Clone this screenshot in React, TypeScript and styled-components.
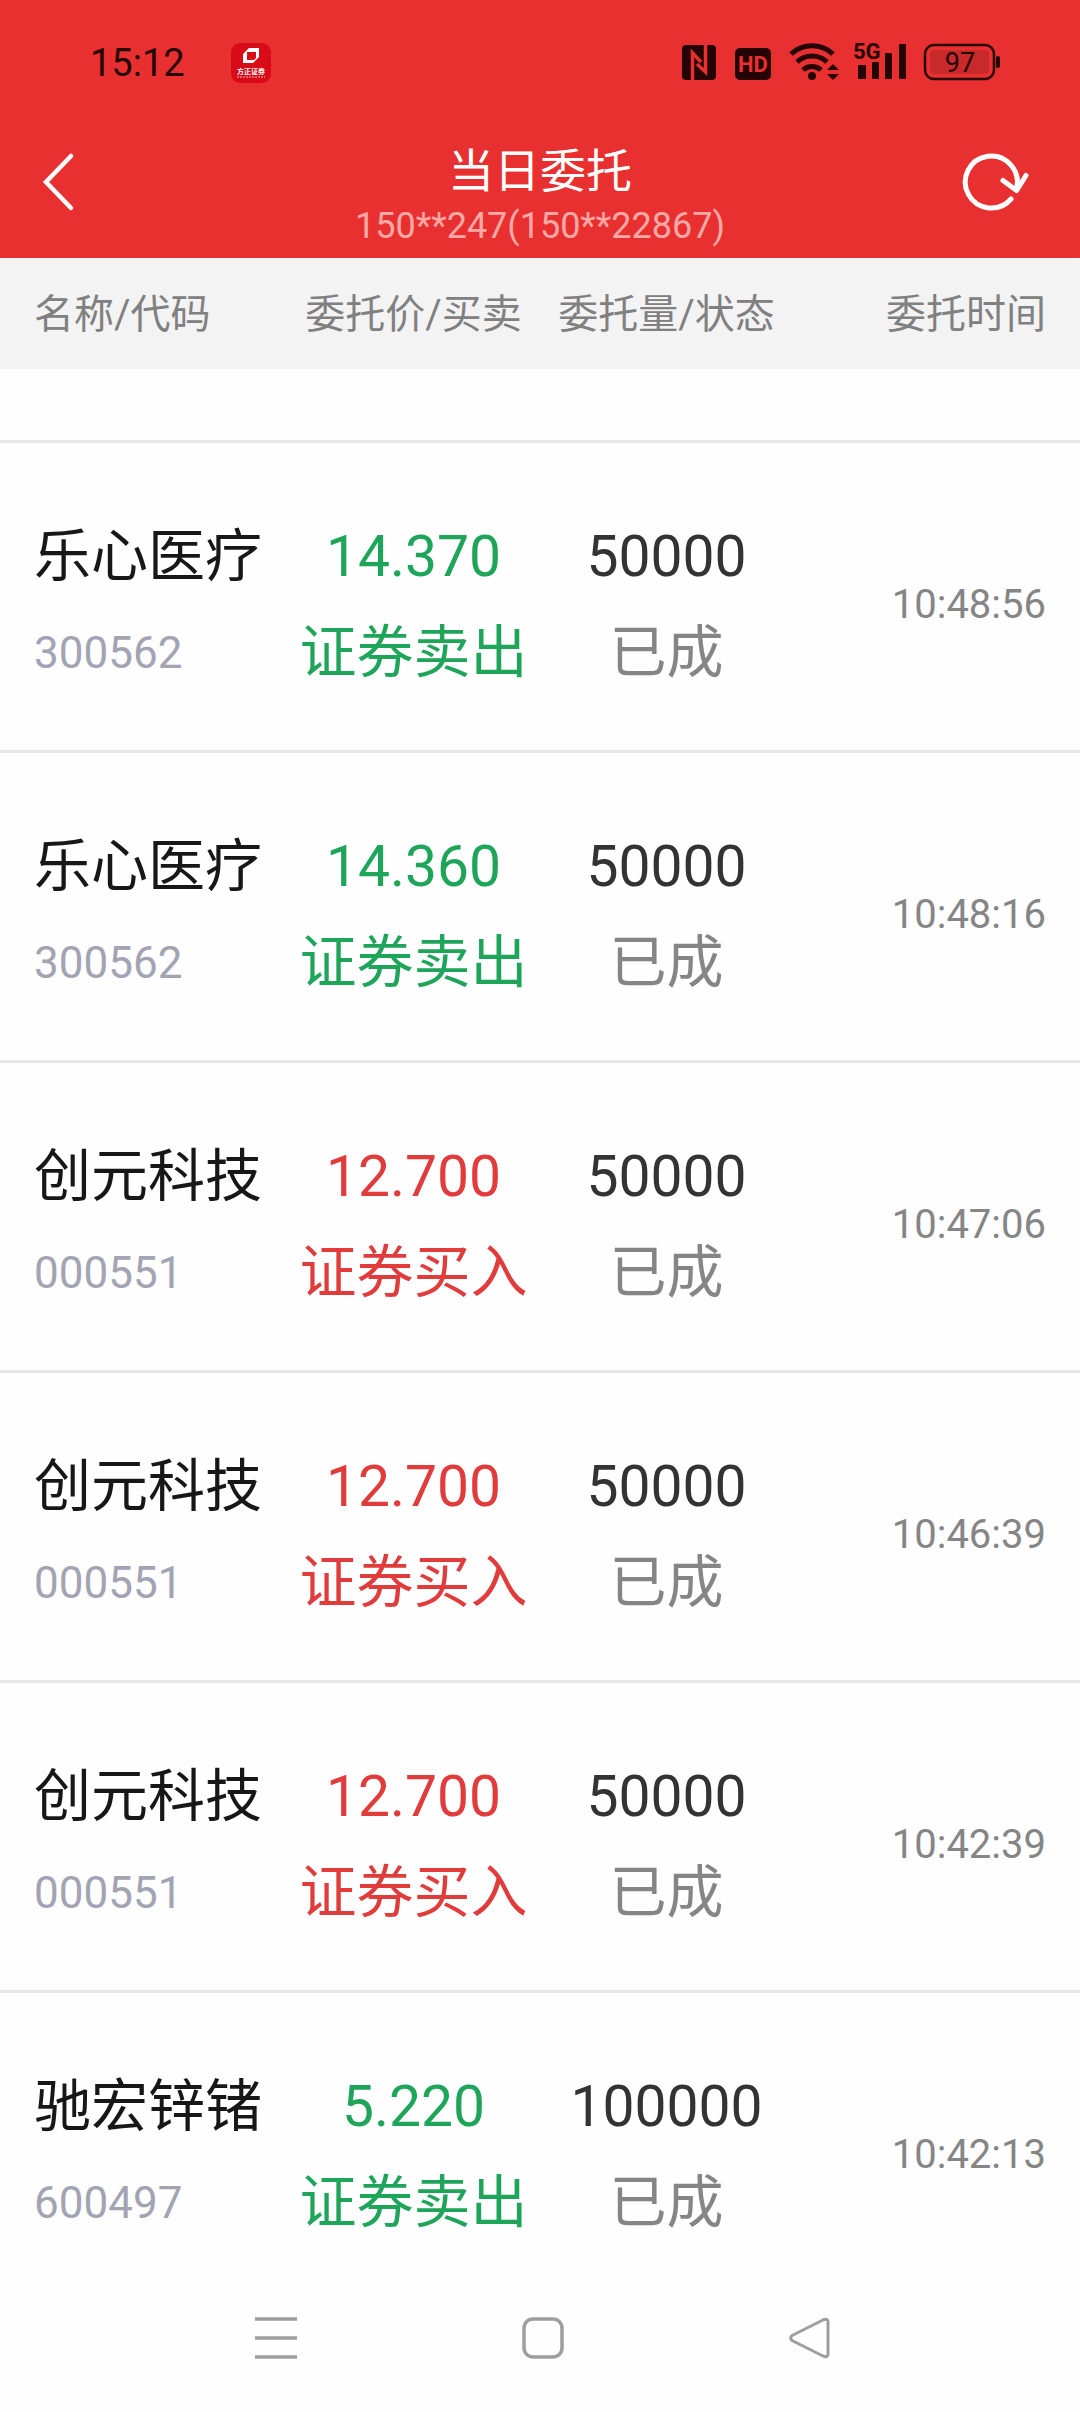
import React from "react";
import styled, { createGlobalStyle } from "styled-components";

const GlobalStyle = createGlobalStyle`
  * { box-sizing: border-box; }
  body { margin: 0; background: #fefefe; }
  body, button { font-family: Roboto, "Noto Sans CJK SC", sans-serif; }
`;

const Screen = styled.div`
  display: flex;
  flex-direction: column;
  height: 100vh;
  overflow: hidden;
`;

const Top = styled.header`
  flex: none;
  background: #e83030;
`;

const StatusBar = styled.div`
  display: flex;
  align-items: center;
  justify-content: space-between;
  height: 126px;
  padding: 0 80px 0 90px;
`;

const StatusGroup = styled.div`
  display: flex;
  align-items: center;
  gap: 46px;
`;

const Clock = styled.time`
  color: #250405;
  font-size: 38px;
  line-height: 48px;
`;

const TitleBar = styled.div`
  display: grid;
  grid-template-columns: 178px 1fr 178px;
  align-items: start;
  height: 132px;
`;

const IconButton = styled.button<{ $start?: boolean }>`
  display: flex;
  align-items: center;
  justify-content: ${(p) => (p.$start ? "flex-start" : "center")};
  height: 112px;
  padding: 0 ${(p) => (p.$start ? 40 : 0)}px;
  border: 0;
  background: none;
  cursor: pointer;
`;

const Heading = styled.div`
  padding-top: 17px;
  text-align: center;
`;

const Title = styled.h1`
  margin: 0;
  color: #fff;
  font-size: 46px;
  font-weight: 400;
  line-height: 56px;
`;

const Account = styled.p`
  margin: 0;
  color: #ffa9a6;
  font-size: 36px;
  line-height: 54px;
`;

const List = styled.main`
  flex: 1;
  min-height: 0;
  overflow-y: auto;
  scrollbar-width: none;
`;

const Table = styled.table`
  display: block;
`;

const Head = styled.thead`
  display: block;
  position: sticky;
  top: 0;
  background: #f3f3f3;
`;

const HeadRow = styled.tr`
  display: grid;
  grid-template-columns: repeat(4, 1fr);
  align-items: center;
  height: 111px;
  padding: 2px 34px 0;
`;

const HeadCell = styled.th<{ $align?: string }>`
  padding: 0;
  color: #808080;
  font-size: 40px;
  font-weight: 400;
  line-height: 60px;
  text-align: ${(p) => p.$align ?? "center"};
  white-space: nowrap;
`;

const Body = styled.tbody`
  display: block;
  padding-top: 71px;
`;

const Row = styled.tr`
  display: grid;
  grid-template-columns: repeat(4, 1fr);
  align-items: center;
  padding: 66px 34px 49px;
  border-top: 3px solid #e7e7e7;
`;

const Cell = styled.td<{ $align?: string }>`
  padding: 0;
  text-align: ${(p) => p.$align ?? "center"};
  white-space: nowrap;
`;

const Line = styled.div<{ $color: string; $small?: boolean }>`
  color: ${(p) => p.$color};
  font-size: ${(p) => (p.$small ? 44 : 57)}px;
  line-height: 96px;
`;

const Time = styled.time`
  color: #858585;
  font-size: 40px;
  line-height: 60px;
`;

const SystemNav = styled.nav`
  flex: none;
  display: flex;
  justify-content: center;
  gap: 148px;
  height: 149px;
  padding-left: 5px;
  background: #fefefe;
`;

const NavButton = styled(IconButton)`
  width: 119px;
  height: 149px;
`;

const GREEN = "#1fa55a";
const RED = "#e03c3c";
const INK = "#250405";

type Order = { name: string; code: string; price: string; sell: boolean; qty: string; time: string };

const orders: Order[] = [
  { name: "乐心医疗", code: "300562", price: "14.370", sell: true, qty: "50000", time: "10:48:56" },
  { name: "乐心医疗", code: "300562", price: "14.360", sell: true, qty: "50000", time: "10:48:16" },
  { name: "创元科技", code: "000551", price: "12.700", sell: false, qty: "50000", time: "10:47:06" },
  { name: "创元科技", code: "000551", price: "12.700", sell: false, qty: "50000", time: "10:46:39" },
  { name: "创元科技", code: "000551", price: "12.700", sell: false, qty: "50000", time: "10:42:39" },
  { name: "驰宏锌锗", code: "600497", price: "5.220", sell: true, qty: "100000", time: "10:42:13" },
];

const BrokerBadge = () => (
  <svg width="40" height="40" viewBox="0 0 40 40" aria-hidden="true">
    <rect width="40" height="40" rx="9" fill="#d90b18" />
    <path fillRule="evenodd" fill="#fff" d="M18 5h10v9l-6 6H12v-9zM16 9v8h7l2-2V9z" />
    <text x="20" y="31" fontSize="7" fontWeight="700" fill="#fff" textAnchor="middle" fontFamily="Noto Sans CJK SC, sans-serif">
      方正证券
    </text>
    <path d="M6 34h28" stroke="#fff" strokeOpacity="0.7" strokeDasharray="2 1" />
  </svg>
);

const StatusIcons = () => (
  <svg width="320" height="56" viewBox="680 35 320 56" role="img" aria-label="NFC HD Wi-Fi 5G 97%">
    <rect x="682" y="45" width="34" height="35" rx="4" fill={INK} />
    <path d="M692.500 80V53L701 62M705.500 45V72L697 64" fill="none" stroke="#e83030" strokeWidth="3.500" />
    <rect x="735" y="48" width="36" height="32" rx="5" fill={INK} />
    <text x="753" y="72" fontSize="22" fontWeight="700" fill="#e83030" textAnchor="middle" fontFamily="Roboto, sans-serif">
      HD
    </text>
    <g fill="none" stroke={INK} strokeWidth="5">
      <path d="M791 54a31 31 0 0 1 42 0" />
      <path d="M797 62a22 22 0 0 1 30 0" />
      <path d="M803 70a13 13 0 0 1 18 0" />
    </g>
    <circle cx="812" cy="76" r="4" fill={INK} />
    <path d="M827 70l6-6 6 6zM827 74h12l-6 6z" fill={INK} />
    <text x="853" y="59" fontSize="22" fontWeight="700" fill={INK} fontFamily="Roboto, sans-serif">
      5G
    </text>
    <rect x="858" y="65" width="8" height="14" rx="1" fill={INK} />
    <rect x="872" y="62" width="7" height="17" rx="1" fill={INK} />
    <rect x="885" y="53" width="7" height="26" rx="1" fill={INK} />
    <rect x="899" y="44" width="7" height="35" rx="1" fill={INK} />
    <rect x="925" y="45" width="69" height="34" rx="9" fill="none" stroke={INK} strokeWidth="2.500" />
    <rect x="930" y="50" width="59" height="24" rx="4" fill="#c82a2b" />
    <text x="960" y="72" fontSize="27" fill={INK} textAnchor="middle" fontFamily="Roboto, sans-serif">
      97
    </text>
    <rect x="996" y="56" width="4" height="12" rx="2" fill={INK} />
  </svg>
);

export default function App() {
  return (
    <Screen>
      <GlobalStyle />
      <Top>
        <StatusBar>
          <StatusGroup>
            <Clock>15:12</Clock>
            <BrokerBadge />
          </StatusGroup>
          <StatusIcons />
        </StatusBar>
        <TitleBar>
          <IconButton $start aria-label="返回">
            <svg width="36" height="60" viewBox="0 0 36 60" fill="none" stroke="#fff" strokeWidth="4.500" strokeLinecap="round">
              <path d="M31 4L6 30l25 26" />
            </svg>
          </IconButton>
          <Heading>
            <Title>当日委托</Title>
            <Account>150**247(150**22867)</Account>
          </Heading>
          <IconButton aria-label="刷新">
            <svg width="78" height="60" viewBox="0 0 78 60" fill="none" stroke="#fff" strokeWidth="5" strokeLinecap="round" strokeLinejoin="round">
              <path d="M59 47A26 26 0 1 1 64.600 36" />
              <path d="M51 28.500L64.600 38.500L74 23.500" />
            </svg>
          </IconButton>
        </TitleBar>
      </Top>
      <List>
        <Table>
          <Head>
            <HeadRow>
              <HeadCell $align="left">名称/代码</HeadCell>
              <HeadCell>委托价/买卖</HeadCell>
              <HeadCell>委托量/状态</HeadCell>
              <HeadCell $align="right">委托时间</HeadCell>
            </HeadRow>
          </Head>
          <Body>
            {orders.map((o) => (
              <Row key={o.time}>
                <Cell $align="left">
                  <Line $color="#171717">{o.name}</Line>
                  <Line $color="#a2a3b3" $small>{o.code}</Line>
                </Cell>
                <Cell>
                  <Line $color={o.sell ? GREEN : RED}>{o.price}</Line>
                  <Line $color={o.sell ? GREEN : RED}>{o.sell ? "证券卖出" : "证券买入"}</Line>
                </Cell>
                <Cell>
                  <Line $color="#333">{o.qty}</Line>
                  <Line $color="#858585">已成</Line>
                </Cell>
                <Cell $align="right">
                  <Time>{o.time}</Time>
                </Cell>
              </Row>
            ))}
          </Body>
        </Table>
      </List>
      <SystemNav>
        <NavButton aria-label="最近任务">
          <svg width="42" height="42" viewBox="0 0 42 42" stroke="#9e9e9e" strokeWidth="3.500">
            <path d="M0 2h42M0 21h42M0 40h42" />
          </svg>
        </NavButton>
        <NavButton aria-label="主屏幕">
          <svg width="42" height="42" viewBox="0 0 42 42" fill="none" stroke="#9e9e9e" strokeWidth="3.500">
            <rect x="2" y="2" width="38" height="38" rx="9" />
          </svg>
        </NavButton>
        <NavButton aria-label="返回上一页">
          <svg width="42" height="42" viewBox="0 0 42 42" fill="none" stroke="#9e9e9e" strokeWidth="3" strokeLinejoin="round">
            <path d="M3 18.500L34 3q5-2 5 2v32q0 4-5 2L3 23.500q-2.500-2.500 0-5z" />
          </svg>
        </NavButton>
      </SystemNav>
    </Screen>
  );
}
